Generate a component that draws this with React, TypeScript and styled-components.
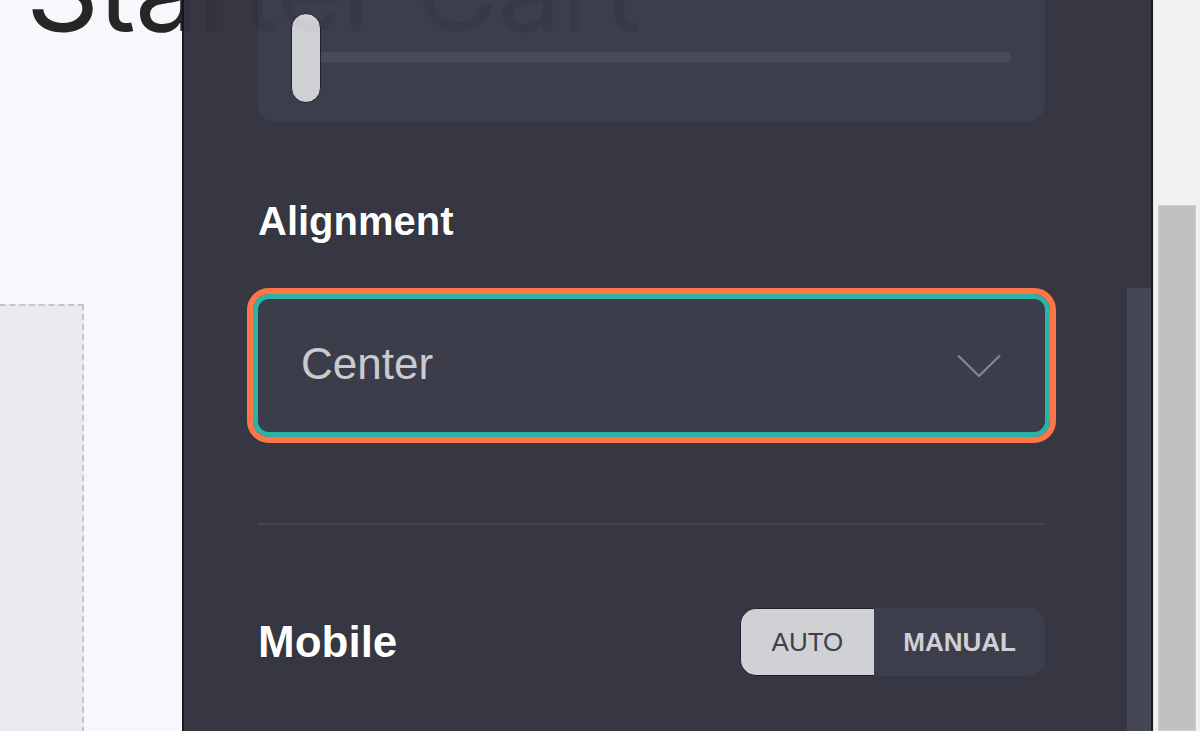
import React from "react";
import styled, { createGlobalStyle } from "styled-components";

const Global = createGlobalStyle`
  html, body { margin: 0; padding: 0; height: 100%; overflow: hidden; }
  body { font-family: "Liberation Sans", Arial, sans-serif; background: #f7f7fc; }
  #root { height: 100%; }
`;

const Page = styled.div`
  display: flex;
  width: 1200px;
  height: 731px;
  overflow: hidden;
`;

const Main = styled.div`
  position: relative;
  flex: 1;
  background: #f7f7fc;
  overflow: hidden;
`;

const Title = styled.h1`
  margin: -78px 0 0 26px;
  font-family: Inter, "Noto Sans", sans-serif;
  font-weight: 400;
  font-size: 114px;
  line-height: 1.2;
  color: #262626;
  white-space: nowrap;
  letter-spacing: -1px;
`;

const DropZone = styled.div`
  margin: 245px 0 0 -20px;
  width: 104px;
  height: 600px;
  background: #ebeaf0;
  border: 2px dashed #c4c4ca;
  box-sizing: border-box;
`;

const PageScroll = styled.div`
  width: 47px;
  background: #f1f1f1;
  border-left: 1px solid #e2e2e2;
  box-sizing: border-box;
  padding: 205px 4px 0 4px;
  display: flex;
`;

const PageThumb = styled.div`
  flex: 1;
  background: #c1c1c1;
  border: 1px solid #cfcfcf;
`;

const Panel = styled.aside`
  position: absolute;
  top: 0;
  right: 0;
  bottom: 0;
  width: 971px;
  box-sizing: border-box;
  background: #33333f;
  border-left: 2px solid #15151f;
  border-right: 2px solid #15151f;
  opacity: 0.975;
  display: flex;
`;

const Content = styled.div`
  width: 787px;
  margin-left: 74px;
  display: flex;
  flex-direction: column;
`;

const SliderCard = styled.div`
  margin-top: -40px;
  height: 162px;
  box-sizing: border-box;
  background: #393a47;
  border-radius: 18px;
  padding: 0 34px 19px 33px;
  display: flex;
  flex-direction: column;
  justify-content: flex-end;
`;

const Slider = styled.div`
  position: relative;
  height: 90px;
`;

const Track = styled.div`
  position: absolute;
  left: 10px;
  right: 0;
  top: 39px;
  height: 10px;
  border-radius: 5px;
  background: #464754;
`;

const Thumb = styled.div`
  position: absolute;
  left: 0;
  top: 0;
  width: 30px;
  height: 90px;
  box-sizing: border-box;
  border-radius: 15px;
  background: #d0d1d5;
  border: 1px solid #1a1a2c;
`;

const Label = styled.div<{ $size: number }>`
  font-family: "Liberation Sans", Arial, sans-serif;
  font-weight: 700;
  font-size: ${(p) => p.$size}px;
  line-height: 1;
  color: #ffffff;
  text-shadow: 0 0 1px #000;
`;

const AlignLabel = styled(Label)`
  margin-top: 79px;
`;

const Select = styled.div`
  margin: 53px -5px 0 -5px;
  height: 143px;
  box-sizing: border-box;
  border: 5px solid #27b2a3;
  border-radius: 16px;
  outline: 6px solid #ff7343;
  outline-offset: 0;
  background: #383946;
  display: flex;
  align-items: center;
  justify-content: space-between;
  padding: 0 44px 0 43px;
`;

const SelectValue = styled.span`
  font-family: "Liberation Sans", Arial, sans-serif;
  font-size: 44px;
  color: #c9cad0;
  margin-top: -4px;
`;

const Divider = styled.hr`
  margin: 86px 0 0 0;
  border: none;
  height: 2px;
  background: #41424f;
`;

const Row = styled.div`
  margin-top: 83px;
  display: flex;
  align-items: center;
  justify-content: space-between;
`;

const Toggle = styled.div`
  display: flex;
  height: 68px;
  border-radius: 16px;
  background: #393a47;
  overflow: hidden;
`;

const Segment = styled.button<{ $active?: boolean }>`
  all: unset;
  box-sizing: border-box;
  display: flex;
  align-items: center;
  justify-content: center;
  height: 100%;
  padding: 0 ${(p) => (p.$active ? 31 : 29)}px;
  font-family: "Liberation Sans", Arial, sans-serif;
  font-size: 26px;
  font-weight: ${(p) => (p.$active ? 400 : 700)};
  color: ${(p) => (p.$active ? "#3b3b45" : "#cfd0d5")};
  background: ${(p) => (p.$active ? "#d0d1d5" : "transparent")};
  border-radius: ${(p) => (p.$active ? "16px 0 0 16px" : "0")};
  border: ${(p) => (p.$active ? "1px solid #1a1a2c" : "none")};
  border-right: none;
`;

const InnerScroll = styled.div`
  margin-left: auto;
  width: 24px;
  padding-top: 288px;
  display: flex;
`;

const InnerThumb = styled.div`
  flex: 1;
  background: #41424f;
`;

export default function App() {
  return (
    <>
      <Global />
      <Page>
        <Main>
          <Title>Starter Cart</Title>
          <DropZone />
          <Panel>
            <Content>
              <SliderCard>
                <Slider>
                  <Track />
                  <Thumb />
                </Slider>
              </SliderCard>
              <AlignLabel $size={40}>Alignment</AlignLabel>
              <Select>
                <SelectValue>Center</SelectValue>
                <svg width="44" height="24" viewBox="0 0 44 24" fill="none">
                  <polyline points="1,1.5 22,22 43,1.5" stroke="#83848d" strokeWidth="2.2" />
                </svg>
              </Select>
              <Divider />
              <Row>
                <Label $size={44}>Mobile</Label>
                <Toggle>
                  <Segment $active>AUTO</Segment>
                  <Segment>MANUAL</Segment>
                </Toggle>
              </Row>
            </Content>
            <InnerScroll>
              <InnerThumb />
            </InnerScroll>
          </Panel>
        </Main>
        <PageScroll>
          <PageThumb />
        </PageScroll>
      </Page>
    </>
  );
}
